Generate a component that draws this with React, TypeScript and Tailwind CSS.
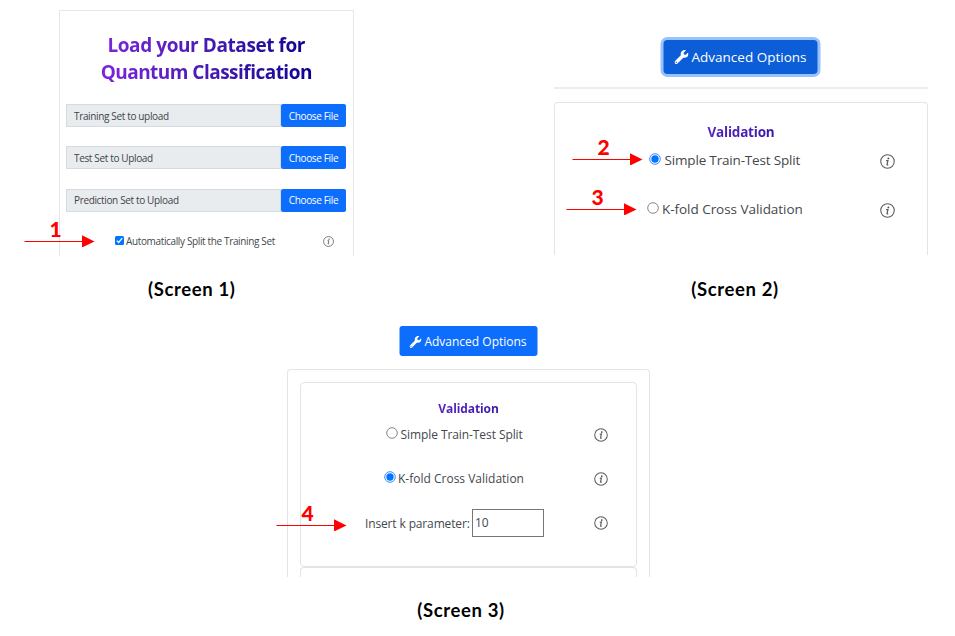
import type { ReactNode } from "react";

function InfoIcon({ className }: { className: string }) {
  return (
    <svg viewBox="0 0 16 16" className={`shrink-0 ${className}`} fill="none" stroke="#5a5d60">
      <circle cx="8" cy="8" r="7.2" strokeWidth="1.15" />
      <circle cx="8.9" cy="4.6" r="1" fill="#4a4d50" stroke="none" />
      <path d="M6.5 7.1 8.5 6.8 7.5 11.3q-.1.8 1.3.1" strokeWidth="1.3" />
    </svg>
  );
}

function Wrench({ className }: { className: string }) {
  return (
    <svg viewBox="0 0 512 512" className={className} fill="currentColor">
      <path d="M507.73 109.1c-2.24-9.03-13.54-12.09-20.12-5.51l-74.36 74.36-67.88-11.31-11.31-67.88 74.36-74.36c6.62-6.62 3.43-17.9-5.66-20.16-47.38-11.74-99.55.91-136.58 37.93-39.64 39.64-50.55 97.1-34.05 147.2L18.74 402.76c-24.99 24.99-24.99 65.51 0 90.5 24.99 24.99 65.51 24.99 90.5 0l213.21-213.21c50.12 16.71 107.47 5.68 147.37-34.22 37.07-37.07 49.7-89.32 37.91-136.73zM64 472c-13.25 0-24-10.75-24-24s10.75-24 24-24 24 10.75 24 24-10.75 24-24 24z" />
    </svg>
  );
}

function Radio({ checked = false }: { checked?: boolean }) {
  return (
    <svg viewBox="0 0 12 12" className="relative -top-px size-3 shrink-0" fill="none">
      <circle cx="6" cy="6" r="5.3" stroke={checked ? "#3d8bfd" : "#858585"} strokeWidth="1" />
      {checked && <circle cx="6" cy="6" r="3.7" fill="#0075ff" />}
    </svg>
  );
}

function Arrow({ label, className }: { label: string; className: string }) {
  return (
    <div className={`absolute h-[26px] w-[71px] text-[#ff0000] ${className}`}>
      <div className="-mt-[1.5px] w-[63px] text-center font-['Lato',sans-serif] text-[21px] leading-[18px] font-black">{label}</div>
      <svg viewBox="0 0 71 12" className="absolute bottom-0 left-0 h-3 w-[71px]" fill="#ff0000">
        <rect x="0.5" y="6" width="60" height="1" />
        <path d="M58 .3 70.5 6.4 58 12.5Z" />
      </svg>
    </div>
  );
}

function Caption({ children, className }: { children: ReactNode; className: string }) {
  return (
    <div className={`text-center font-['Lato',sans-serif] text-[18.5px] leading-6 font-bold tracking-[0.64px] text-black ${className}`}>
      {children}
    </div>
  );
}

function FileRow({ label }: { label: string }) {
  return (
    <div className="flex h-[23px] text-[10px] tracking-[-0.35px]">
      <div className="flex w-[215px] items-center border border-[#d5dbe0] bg-[#e9ecef] pt-px pl-[7px] text-[#3f4448]">{label}</div>
      <button className="w-[65px] rounded-[2px] bg-[#0d6efd] pt-px text-white">Choose File</button>
    </div>
  );
}

function Validation({ className }: { className: string }) {
  return (
    <div className={`bg-linear-to-r from-[#8a2be2] from-10% to-[#00008b] to-90% bg-clip-text text-center font-bold text-transparent ${className}`}>
      Validation
    </div>
  );
}

export default function App() {
  return (
    <main className="relative h-[636px] w-[955px] overflow-hidden bg-white font-['Open_Sans','Noto_Sans',sans-serif] text-[#44484c]">
      <div className="flex h-[307px]">
        <section className="w-[353.5px] pt-[10px] pl-[59px]">
          <div className="h-[246px] border border-b-0 border-[#e6e6e8] px-[6px] pt-[21px]">
            <h1 className="mx-auto w-[216px] bg-linear-to-r from-[#8125dc] to-[#08008f] bg-clip-text text-center text-[19px] leading-[27px] font-bold tracking-[-0.42px] whitespace-nowrap text-transparent">
              Load your Dataset for
              <br />
              <span className="tracking-[-0.52px]">Quantum Classification</span>
            </h1>
            <div className="mt-[18px] flex flex-col gap-[19.3px]">
              <FileRow label="Training Set to upload" />
              <FileRow label="Test Set to Upload" />
              <FileRow label="Prediction Set to Upload" />
            </div>
            <div className="mt-[22px] flex h-4 items-center pl-[49px] text-[10px] tracking-[-0.36px]">
              <svg viewBox="0 0 9 9" className="relative -top-px mr-[2px] size-[9px]">
                <rect width="9" height="9" rx="1.5" fill="#0075ff" />
                <path d="m1.8 4.6 1.9 1.9 3.5-4.3" fill="none" stroke="white" strokeWidth="1.3" />
              </svg>
              <span className="w-[197px]">Automatically Split the Training Set</span>
              <InfoIcon className="size-[11px]" />
            </div>
          </div>
          <Caption className="mt-[21px] mr-[29px]">(Screen 1)</Caption>
        </section>

        <section className="ml-[200.5px] w-[374px] pt-[40px]">
          <button className="mx-auto flex h-[34px] w-[154px] -translate-x-[0.5px] items-center justify-center rounded-[4px] bg-[#0b5ed7] text-[13.5px] text-white ring-3 ring-[#98c1fe]">
            <Wrench className="mr-[3px] size-[14px]" />
            Advanced Options
          </button>
          <div className="mt-[13px] h-[2px] bg-[#ececee]" />
          <div className="mt-[13px] h-[153px] rounded-t-[4px] border border-b-0 border-[#e4e4e6] pt-[19px]">
            <Validation className="text-[13.5px] leading-[20px] tracking-[-0.2px]" />
            <div className="mt-[8px] flex h-5 items-center pl-[93.5px] text-[13.5px] tracking-[-0.17px]">
              <Radio checked />
              <span className="ml-1 w-[215.5px]">Simple Train-Test Split</span>
              <InfoIcon className="relative top-px size-[15px]" />
            </div>
            <div className="mt-[29px] flex h-5 items-center pl-[92px] text-[13.5px] tracking-[-0.04px]">
              <Radio />
              <span className="ml-[3px] w-[218px]">K-fold Cross Validation</span>
              <InfoIcon className="relative top-px size-[15px]" />
            </div>
          </div>
          <Caption className="mt-[22px] mr-[12px]">(Screen 2)</Caption>
        </section>
      </div>

      <section className="ml-[287px] w-[363px] pt-[19px]">
        <button className="mx-auto flex h-[30px] w-[138px] -translate-x-[0.5px] items-center justify-center rounded-[3px] bg-[#0d6efd] pt-px text-[12px] text-white">
          <Wrench className="mr-[3px] size-[12px]" />
          Advanced Options
        </button>
        <div className="mt-[13px] h-[208px] rounded-t-[4px] border border-b-0 border-[#e3e4e5] px-[12px] pt-[12px]">
          <div className="h-[185px] rounded-[4px] border border-[#e3e4e5] pt-[16px]">
            <Validation className="text-[12px] leading-[20px] tracking-[-0.1px]" />
            <div className="mt-[6px] flex h-[18px] items-center pl-[84.5px] text-[12px] tracking-[-0.08px]">
              <Radio />
              <span className="ml-[3px] w-[193.5px] pt-px">Simple Train-Test Split</span>
              <InfoIcon className="relative top-px size-[14px]" />
            </div>
            <div className="mt-[26px] flex h-[18px] items-center pl-[83px] text-[12px]">
              <Radio checked />
              <span className="ml-[2px] w-[196px] pt-px">K-fold Cross Validation</span>
              <InfoIcon className="relative top-px size-[14px]" />
            </div>
            <div className="mt-[22px] flex h-7 items-center pl-[64px] text-[12px]">
              <span className="w-[107px] pt-px tracking-[-0.14px] whitespace-nowrap">Insert k parameter:</span>
              <div className="mr-[50px] flex h-7 w-[72px] items-center border border-[#767676] pl-[2px]">10</div>
              <InfoIcon className="size-[14px]" />
            </div>
          </div>
          <div className="h-[10px] rounded-t-[4px] border border-b-0 border-[#e3e4e5]" />
        </div>
        <Caption className="mt-[21px] mr-[15px]">(Screen 3)</Caption>
      </section>

      <Arrow label="1" className="top-[221px] left-[24px]" />
      <Arrow label="2" className="top-[139px] left-[572px]" />
      <Arrow label="3" className="top-[189px] left-[566px]" />
      <Arrow label="4" className="top-[505px] left-[276px]" />
    </main>
  );
}
